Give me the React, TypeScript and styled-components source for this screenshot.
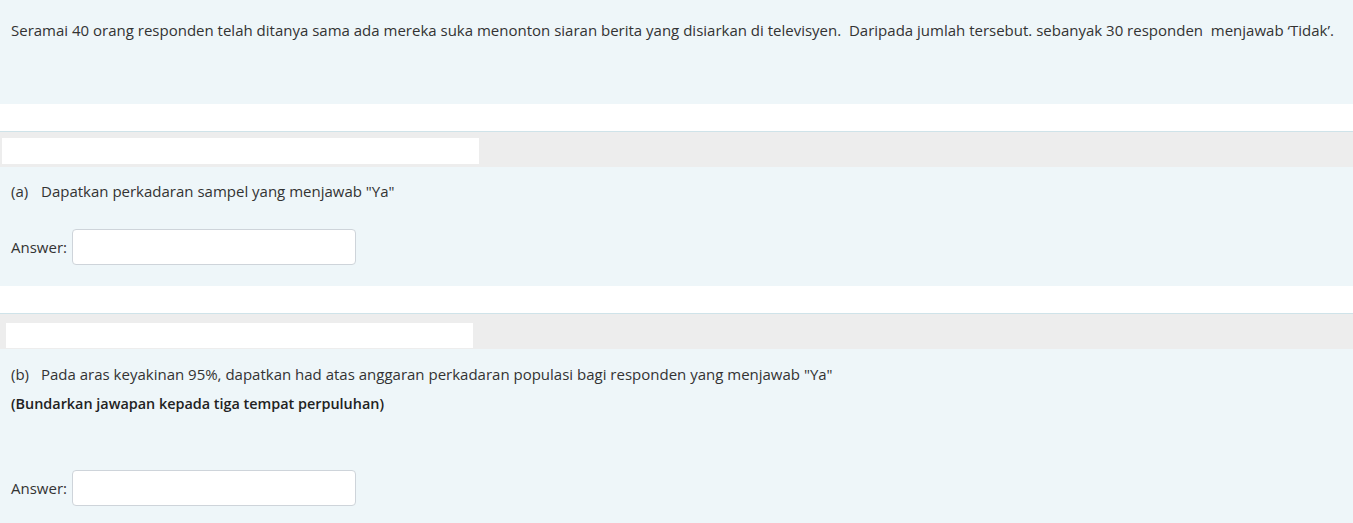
import React from "react";
import styled, { createGlobalStyle } from "styled-components";

const Global = createGlobalStyle`
  html, body { margin: 0; padding: 0; background: #ffffff; }
  body {
    font-family: "Open Sans", "Liberation Sans", sans-serif;
    font-size: 15px;
    line-height: 22px;
    color: #333333;
  }
`;

const Page = styled.div`
  display: flex;
  flex-direction: column;
  width: 1353px;
  height: 523px;
  overflow: hidden;
`;

const InfoPanel = styled.div`
  background: #eef6f9;
  height: 104px;
  box-sizing: border-box;
  padding: 19px 11px 0;
  flex: none;
`;

const Gap = styled.div`
  height: 27px;
  flex: none;
  background: #ffffff;
`;

const HeaderBand = styled.div<{ $inset: number; $top: number }>`
  flex: none;
  height: 36px;
  box-sizing: border-box;
  border-top: 1px solid #cfe3e9;
  background: #ededed;
  padding: ${(p) => p.$top}px 0 0 ${(p) => p.$inset}px;
  display: flex;
  align-items: flex-start;
`;

const HeaderSlot = styled.div<{ $w: number; $h: number }>`
  width: ${(p) => p.$w}px;
  height: ${(p) => p.$h}px;
  background: #ffffff;
`;

const QuestionPanel = styled.div<{ $h?: number; $pt: number }>`
  background: #eef6f9;
  flex: ${(p) => (p.$h ? "none" : "1")};
  height: ${(p) => (p.$h ? `${p.$h}px` : "auto")};
  box-sizing: border-box;
  padding: ${(p) => p.$pt}px 11px 0;
  display: flex;
  flex-direction: column;
`;

const Prompt = styled.div`
  display: flex;
`;

const Label = styled.span`
  width: 30px;
  flex: none;
`;

const Note = styled.div`
  font-weight: 600;
  font-size: 14.4px;
  margin-top: 8px;
  color: #222;
`;

const AnswerRow = styled.div<{ $mt: number }>`
  display: flex;
  align-items: center;
  gap: 5px;
  margin-top: ${(p) => p.$mt}px;
`;

const AnswerInput = styled.input`
  width: 284px;
  height: 36px;
  box-sizing: border-box;
  border: 1px solid #ced4da;
  border-radius: 4px;
  background: #ffffff;
  outline: none;
  font: inherit;
  padding: 0 8px;
`;

export default function App() {
  return (
    <>
      <Global />
      <Page>
        <InfoPanel>
          Seramai 40 orang responden telah ditanya sama ada mereka suka menonton siaran berita yang disiarkan di televisyen.&nbsp; Daripada jumlah tersebut. sebanyak 30 responden&nbsp; menjawab ‘Tidak’.
        </InfoPanel>
        <Gap />
        <HeaderBand $inset={2} $top={6}>
          <HeaderSlot $w={477} $h={26} />
        </HeaderBand>
        <QuestionPanel $h={119} $pt={13}>
          <Prompt>
            <Label>(a)</Label>
            <span>Dapatkan perkadaran sampel yang menjawab "Ya"</span>
          </Prompt>
          <AnswerRow $mt={27}>
            <span>Answer:</span>
            <AnswerInput type="text" />
          </AnswerRow>
        </QuestionPanel>
        <Gap />
        <HeaderBand $inset={6} $top={9}>
          <HeaderSlot $w={467} $h={25} />
        </HeaderBand>
        <QuestionPanel $pt={14}>
          <Prompt>
            <Label>(b)</Label>
            <span>Pada aras keyakinan 95%, dapatkan had atas anggaran perkadaran populasi bagi responden yang menjawab "Ya"</span>
          </Prompt>
          <Note>(Bundarkan jawapan kepada tiga tempat perpuluhan)</Note>
          <AnswerRow $mt={55}>
            <span>Answer:</span>
            <AnswerInput type="text" />
          </AnswerRow>
        </QuestionPanel>
      </Page>
    </>
  );
}
